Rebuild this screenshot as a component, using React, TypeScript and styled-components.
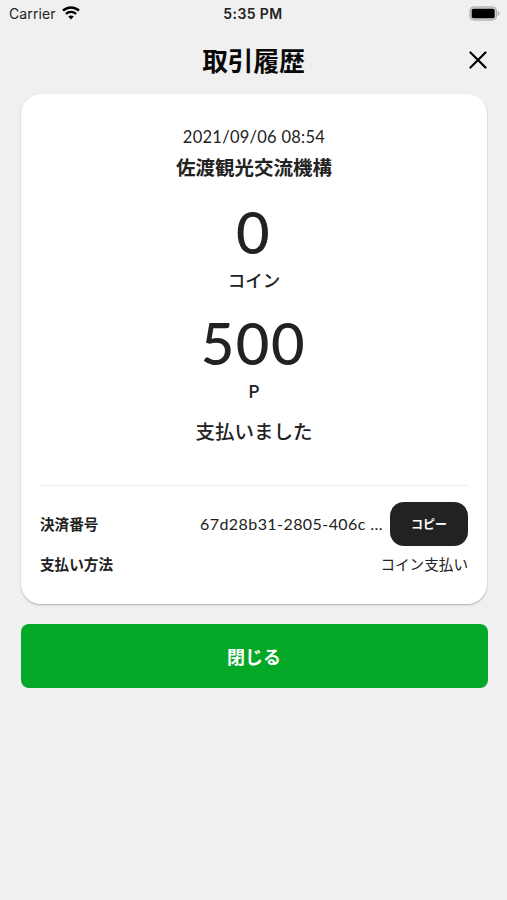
import React from 'react';
import styled, { createGlobalStyle } from 'styled-components';

const GlobalStyle = createGlobalStyle`
  * { box-sizing: border-box; }
  body { margin: 0; background: #f0f0f0; }
  button { border: 0; padding: 0; margin: 0; background: none; }
`;

const jp = `'Noto Sans CJK JP', sans-serif`;
const latin = `Lato, 'Noto Sans CJK JP', sans-serif`;

const Screen = styled.main`
  width: 507px;
  height: 900px;
  overflow: hidden;
  background: #f0f0f0;
  color: #222;
  font-family: ${jp};
`;

const StatusBar = styled.div`
  display: grid;
  grid-template-columns: 1fr auto 1fr;
  align-items: center;
  height: 27px;
  padding: 0 7px 0 9px;
  font-family: Inter, sans-serif;
  font-size: 14px;
  color: #222;
`;

const Carrier = styled.div`
  display: flex;
  align-items: center;
  gap: 6px;
  letter-spacing: 0.1px;
  svg { margin-top: -1px; }
`;

const Clock = styled.div`
  margin: 0 2px 0 -1px;
  font-size: 14px;
  font-weight: 600;
  letter-spacing: 0.4px;
`;

const Battery = styled.svg`
  justify-self: end;
`;

const Header = styled.header`
  display: grid;
  grid-template-columns: 40px 1fr 40px;
  align-items: center;
  height: 67px;
  padding: 0 9px 2px;
`;

const Title = styled.h1`
  grid-column: 2;
  margin: 0;
  text-align: center;
  font-size: 25.7px;
  line-height: 40px;
  font-weight: 700;
  color: #080808;
`;

const CloseIcon = styled.button`
  display: flex;
  justify-content: center;
  color: #000;
`;

const Card = styled.section`
  height: 510px;
  margin: 0 20px 0 21px;
  padding: 33px 19px 0;
  border-radius: 20px;
  background: #fff;
  box-shadow: 0 1px 2px rgba(0, 0, 0, 0.28);
`;

const Summary = styled.div`
  display: flex;
  flex-direction: column;
  align-items: center;
  height: 359px;
  border-bottom: 1px solid #eee;
`;

const DateText = styled.time`
  font: 400 16.5px/20px ${latin};
  letter-spacing: 0.26px;
`;

const Merchant = styled.div`
  margin-top: 5px;
  font-size: 19.5px;
  line-height: 30px;
  font-weight: 700;
`;

const Amount = styled.div<{ $gap: number }>`
  margin-top: ${(p) => p.$gap}px;
  font: 500 58px/60px ${latin};
  letter-spacing: 1.6px;
  margin-right: 1px;
`;

const Unit = styled.div`
  margin-top: 6px;
  font-size: 17.5px;
  line-height: 24px;
  font-weight: 500;
`;

const Message = styled.div`
  margin-top: 13px;
  font-size: 19.5px;
  line-height: 30px;
  font-weight: 500;
`;

const Row = styled.div<{ $height: number }>`
  display: flex;
  align-items: center;
  height: ${(p) => p.$height}px;
  font-size: 14.6px;
`;

const Label = styled.span`
  font-weight: 700;
  line-height: 22px;
`;

const Value = styled.span`
  margin-left: auto;
  font-weight: 400;
  line-height: 22px;
`;

const PaymentId = styled(Value)`
  font-family: ${latin};
  font-size: 16px;
  letter-spacing: 0.43px;
`;

const CopyButton = styled.button`
  width: 78px;
  height: 44px;
  margin-left: 7px;
  border-radius: 14px;
  background: #222;
  color: #fff;
  font: 700 12px/20px ${jp};
`;

const Details = styled.div`
  padding-top: 15px;
`;

const DoneButton = styled.button`
  display: block;
  width: 467px;
  height: 64px;
  margin: 20px 20px 0 20.5px;
  border-radius: 8px;
  background: #03a826;
  color: #fff;
  font: 700 18px/28px ${jp};
`;

export default function App() {
  return (
    <Screen>
      <GlobalStyle />
      <StatusBar>
        <Carrier>
          <span>Carrier</span>
          <svg width="18" height="14" viewBox="0 0 18 14" fill="none" stroke="#000">
            <path d="M1 4.7C5.5.4 12.5.4 17 4.7" strokeWidth="2.5" />
            <path d="M3.9 7.8c2.9-2.7 7.3-2.7 10.2 0" strokeWidth="2.3" />
            <path d="M6.2 10.6c1.6-1.5 4-1.5 5.6 0L9 13.5z" fill="#000" stroke="none" />
          </svg>
        </Carrier>
        <Clock>5:35 PM</Clock>
        <Battery width="31" height="15" viewBox="0 0 31 15">
          <rect x="0.9" y="0.9" width="26.6" height="13.2" rx="4" fill="#d2d2d2" stroke="#a9a9a9" />
          <rect x="2.7" y="2.8" width="23" height="9.4" rx="1.8" fill="#000" />
          <path d="M28.6 5c2.5.8 2.5 4.2 0 5z" fill="#a9a9a9" />
        </Battery>
      </StatusBar>
      <Header>
        <Title>取引履歴</Title>
        <CloseIcon aria-label="閉じる">
          <svg width="18" height="18" viewBox="0 0 18 18" fill="none" stroke="currentColor" strokeWidth="2.2" strokeLinecap="round">
            <path d="M1.5 1.5l15 15M16.5 1.5l-15 15" />
          </svg>
        </CloseIcon>
      </Header>
      <Card>
        <Summary>
          <DateText>2021/09/06 08:54</DateText>
          <Merchant>佐渡観光交流機構</Merchant>
          <Amount $gap={20}>0</Amount>
          <Unit>コイン</Unit>
          <Amount $gap={21}>500</Amount>
          <Unit>P</Unit>
          <Message>支払いました</Message>
        </Summary>
        <Details>
          <Row $height={45}>
            <Label>決済番号</Label>
            <PaymentId>67d28b31-2805-406c ...</PaymentId>
            <CopyButton>コピー</CopyButton>
          </Row>
          <Row $height={36}>
            <Label>支払い方法</Label>
            <Value>コイン支払い</Value>
          </Row>
        </Details>
      </Card>
      <DoneButton>閉じる</DoneButton>
    </Screen>
  );
}
